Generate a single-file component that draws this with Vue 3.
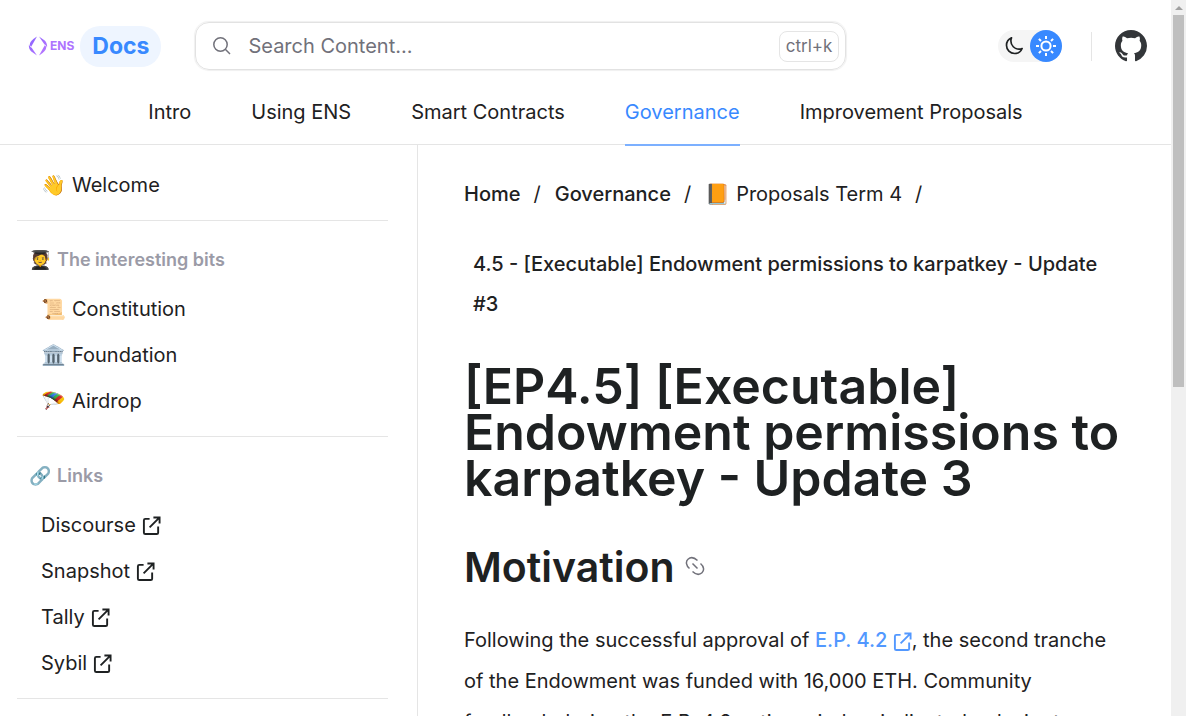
<script setup>
const tabs = [
  { label: 'Intro' },
  { label: 'Using ENS' },
  { label: 'Smart Contracts' },
  { label: 'Governance', active: true },
  { label: 'Improvement Proposals' },
]
const bits = [
  { icon: '📜', label: 'Constitution' },
  { icon: '🏛️', label: 'Foundation' },
  { icon: '🪂', label: 'Airdrop' },
]
const links = ['Discourse', 'Snapshot', 'Tally', 'Sybil']
</script>

<template>
  <div class="page">
    <header class="header">
      <div class="top">
        <a href="#" class="brand" aria-label="ENS Docs">
          <svg class="mark" viewBox="0 0 20 20" aria-hidden="true">
            <defs>
              <linearGradient id="ens" gradientUnits="userSpaceOnUse" x1="0" y1="0" x2="20" y2="20">
                <stop offset="0" stop-color="#8560ff" />
                <stop offset="1" stop-color="#c07cff" />
              </linearGradient>
            </defs>
            <g fill="url(#ens)">
              <path d="M9 .5L3.200 10.700C1.400 9.500 1.600 7.500 2.600 6C4 4 6.500 2 9 .5Z" />
              <path d="M1 8C.5 11 1.300 13.500 3.300 15.500L9 19.500L3.700 11.800C2 10.800 1.200 9.500 1 8Z" />
              <path d="M11 19.500L16.800 9.300C18.600 10.500 18.400 12.500 17.400 14C16 16 13.500 18 11 19.500Z" />
              <path d="M19 12C19.500 9 18.700 6.500 16.700 4.500L11 .5L16.300 8.200C18 9.200 18.800 10.500 19 12Z" />
            </g>
          </svg>
          <span class="ens">ENS</span>
          <span class="docs">Docs</span>
        </a>
        <label class="search">
          <svg viewBox="0 0 20 20" aria-hidden="true"><circle cx="8.500" cy="8.500" r="6.700" /><path d="M13.300 13.300L18 18" /></svg>
          <input type="text" placeholder="Search Content..." aria-label="Search Content" />
          <kbd>ctrl+k</kbd>
        </label>
        <div class="tools">
          <div class="theme">
            <button type="button" aria-label="Dark theme">
              <svg class="moon" viewBox="0 0 24 24"><path d="M21.752 15.002A9.720 9.720 0 0 1 18 15.750c-5.385 0-9.750-4.365-9.750-9.750 0-1.330.266-2.597.748-3.752A9.753 9.753 0 0 0 3 11.250C3 16.635 7.365 21 12.750 21a9.753 9.753 0 0 0 9.002-5.998Z" /></svg>
            </button>
            <button type="button" class="on" aria-label="Light theme">
              <svg class="sun" viewBox="0 0 24 24"><circle cx="12" cy="12" r="4.600" /><path d="M12 2v3M12 19v3M2 12h3M19 12h3M4.900 4.900L7 7M17 17l2.100 2.100M4.900 19.100L7 17M17 7l2.100-2.100" /></svg>
            </button>
          </div>
          <span class="rule"></span>
          <a href="#" class="github" aria-label="GitHub">
            <svg viewBox="0 0 16 16"><path d="M8 0C3.580 0 0 3.580 0 8c0 3.540 2.290 6.530 5.470 7.590.4.070.550-.170.550-.380 0-.190-.010-.820-.010-1.490-2.010.370-2.530-.490-2.690-.940-.090-.230-.480-.940-.820-1.130-.280-.150-.680-.520-.010-.530.630-.010 1.080.580 1.230.820.720 1.210 1.870.870 2.330.660.070-.520.280-.870.510-1.070-1.780-.200-3.640-.890-3.640-3.950 0-.870.310-1.590.820-2.150-.080-.200-.360-1.020.080-2.120 0 0 .670-.210 2.200.820.640-.180 1.320-.270 2-.270s1.360.090 2 .270c1.530-1.040 2.200-.820 2.200-.820.440 1.100.160 1.920.080 2.120.510.560.820 1.270.820 2.150 0 3.070-1.870 3.750-3.650 3.950.290.250.540.730.540 1.480 0 1.070-.010 1.930-.010 2.200 0 .210.150.460.550.380A8.010 8.010 0 0 0 16 8c0-4.420-3.580-8-8-8Z" /></svg>
          </a>
        </div>
      </div>
      <nav class="tabs" aria-label="Sections">
        <a v-for="t in tabs" :key="t.label" href="#" :class="{ active: t.active }">{{ t.label }}</a>
      </nav>
    </header>

    <div class="body">
      <nav class="side" aria-label="Pages">
        <section><a href="#" class="item"><span class="emoji">👋</span>Welcome</a></section>
        <section>
          <h4><span class="emoji">🧑‍🎓</span>The interesting bits</h4>
          <a v-for="b in bits" :key="b.label" href="#" class="item"><span class="emoji">{{ b.icon }}</span>{{ b.label }}</a>
        </section>
        <section>
          <h4><span class="emoji">🔗</span>Links</h4>
          <a v-for="l in links" :key="l" href="#" class="item">{{ l }}
            <svg class="ext" viewBox="0 0 20 20" aria-hidden="true"><path d="M8 3H3.500Q2 3 2 4.500V17.500Q2 19 3.500 19H15.500Q17 19 17 17.500V11M8 12L18.500 1.500M12 1.500H18.500V8" /></svg>
          </a>
        </section>
      </nav>

      <main class="content">
        <nav class="crumbs" aria-label="Breadcrumb">
          <a href="#">Home</a><span class="sep">/</span>
          <a href="#">Governance</a><span class="sep">/</span>
          <a href="#" class="plain"><span class="emoji">📙</span>Proposals Term 4</a><span class="sep">/</span>
        </nav>
        <a href="#" class="current">4.5 - [Executable] Endowment permissions to karpatkey - Update #3</a>
        <h1>[EP4.5] [Executable] Endowment permissions to karpatkey - Update 3</h1>
        <h2>Motivation
          <svg viewBox="0 0 20 20" aria-hidden="true"><path d="M4.500 12.500C1 9.500 .5 5.500 3 3.200C5.500 1 9 1.200 12.500 4.500M15.500 7.500C19 10.500 19.500 14.500 17 16.800C14.500 19 11 18.800 7.500 15.500M7.500 7.500L12.500 12.500" /></svg>
        </h2>
        <p>Following the successful approval of <a href="#">E.P. 4.2 <svg class="ext" viewBox="0 0 20 20" aria-hidden="true"><path d="M8 3H3.500Q2 3 2 4.500V17.500Q2 19 3.500 19H15.500Q17 19 17 17.500V11M8 12L18.500 1.500M12 1.500H18.500V8" /></svg></a>, the second tranche of the Endowment was funded with 16,000 ETH. Community feedback during the E.P. 4.2 voting window indicated a desire to</p>
      </main>
    </div>
    <div class="scrollbar" aria-hidden="true"><i class="up"></i><i class="thumb"></i></div>
  </div>
</template>

<style>
body { overflow: hidden; background: #fff; }
</style>
<style scoped>
* { box-sizing: border-box; }
.page { height: 100vh; overflow: hidden; padding-right: 15px; display: flex; flex-direction: column; font: 20px/32px Inter, "Noto Sans", sans-serif; color: #1e2122; }
a { color: inherit; text-decoration: none; }
svg { flex: none; fill: none; stroke: currentColor; }
.header { flex: none; border-bottom: 1px solid #e5e5e5; }
.top { display: flex; align-items: center; height: 80px; padding: 12px 24px 0 28px; }
.brand { display: flex; align-items: center; margin-right: 34px; }
.mark { width: 20px; height: 20px; stroke: none; }
.ens { margin: 0 6px 0 2px; font-size: 12px; font-weight: 700; color: #ae74ff; }
.docs { padding: 4px 12px; border-radius: 20px; background: #eef5ff; color: #3889ff; font-size: 23px; font-weight: 700; line-height: 33px; }
.search { flex: 0 1 651px; display: flex; align-items: center; height: 48px; padding: 0 6px 0 16px; border: 1px solid #e2e2e2; border-radius: 14px; box-shadow: 0 0 1px 1px #f0f0f0; color: #71717a; }
.search svg { width: 20px; height: 20px; stroke-width: 1.500; }
.search input { flex: 1; min-width: 0; margin-left: 16px; padding: 0; border: 0; outline: 0; background: none; font: inherit; color: inherit; }
.search input::placeholder { color: #71717a; opacity: 1; }
kbd { padding: 0 6px; border: 1px solid #e5e5e5; border-radius: 8px; font: 17px/29px Inter, sans-serif; }
.tools { margin-left: auto; display: flex; align-items: center; }
.theme { display: flex; border-radius: 16px; background: #f5f5f5; }
.theme button { width: 32px; height: 32px; padding: 0; border: 0; border-radius: 50%; display: grid; place-items: center; background: none; color: #1e2122; }
.theme .on { background: #3889ff; color: #fff; }
.moon { width: 20px; height: 20px; stroke-width: 2; stroke-linejoin: round; }
.sun { width: 24px; height: 24px; stroke-width: 2; }
.rule { width: 1px; height: 29px; margin: 0 23px 0 29px; background: #e5e5e5; }
.github svg { display: block; width: 32px; height: 32px; fill: #333639; stroke: none; }
.tabs { display: flex; justify-content: center; gap: 60px; }
.tabs a { height: 64px; padding-top: 16px; }
.tabs .active { color: #3889ff; border-bottom: 2px solid #7cb0ff; margin-bottom: -2px; height: 66px; }
.body { flex: 1; min-height: 0; display: flex; }
.side { flex: none; width: 418px; padding: 17px 29px 0 17px; border-right: 1px solid #e5e5e5; }
.side section { border-bottom: 1px solid #e5e5e5; padding-bottom: 12px; margin-bottom: 23px; }
.item { display: flex; align-items: center; padding: 7px 0 7px 24px; line-height: 32px; }
.emoji { margin-right: 6px; }
h4 { margin: 0 0 10px; padding-left: 12px; font-size: 18px; line-height: 32px; font-weight: 600; color: #9b9ba7; }
.ext { width: 19px; height: 19px; margin-left: 6px; stroke-width: 2; }
.content { flex: 1; min-width: 0; padding: 29px 46px 0; }
.crumbs { display: flex; line-height: 40px; }
.crumbs a, .current { font-weight: 500; }
.crumbs .plain { font-weight: 400; }
.sep { margin: 0 14px 0 13px; }
.current { display: block; padding: 0 9px; margin-top: 30px; line-height: 40px; }
h1 { margin: 39px 0 0; font-size: 50px; line-height: 46px; font-weight: 600; }
h2 { margin: 40px 0 0; font-size: 41px; line-height: 52px; font-weight: 600; }
h2 svg { width: 20px; height: 20px; vertical-align: 6px; color: #71717a; stroke-width: 1.500; }
p { margin: 27px 0 0; line-height: 41px; }
p a { color: #5298ff; font-weight: 500; }
p .ext { margin-left: 0; vertical-align: -4px; }
.scrollbar { position: fixed; top: 0; right: 0; bottom: 0; width: 15px; padding: 6px 2px 0; background: #f0f0f0; }
.up { display: block; width: 0; margin: 0 auto 5px; border: 4px solid transparent; border-top: 0; border-bottom-color: #a0a0a0; }
.thumb { display: block; height: 52vh; background: #bfbfbf; }
</style>
